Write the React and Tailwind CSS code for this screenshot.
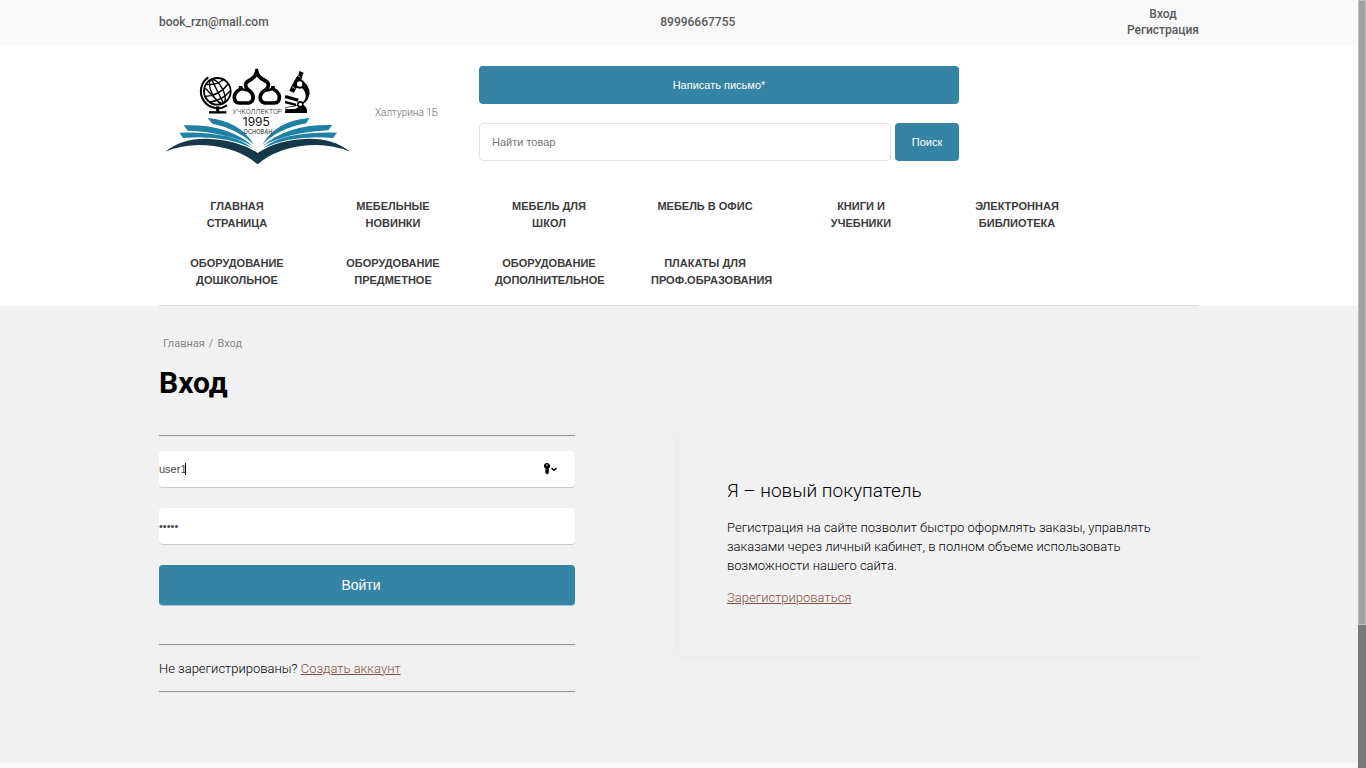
import React, { useState } from "react";

const menu = [
  "Главная страница",
  "Мебельные новинки",
  "Мебель для школ",
  "Мебель в офис",
  "Книги и учебники",
  "Электронная библиотека",
  "Оборудование дошкольное",
  "Оборудование предметное",
  "Оборудование дополнительное",
  "Плакаты для проф.образования",
];

function Logo() {
  return (
    <svg viewBox="12 21 600 330" className="h-[110px] w-[200px] shrink-0" role="img" aria-label="Учколлектор">
      <g fill="none" stroke="#000">
        <circle cx="187" cy="109" r="40" strokeWidth="5.5" />
        <ellipse cx="187" cy="109" rx="17" ry="39" strokeWidth="4" transform="rotate(-28 187 109)" />
        <path d="M170 74 L205 144 M151 124 Q194 122 219 87 M156 88 Q184 91 204 74 M163 141 Q202 137 225 108 M151 100 L196 147" strokeWidth="4" />
        <path d="M160 67 A49 49 0 1 0 216 151" strokeWidth="6" />
        <path d="M188 154 V170" strokeWidth="9" />
        <path d="M162 172 H214" strokeWidth="7" />
        <path d="M257 93 V102 Q240 111 238 124 Q237 144 253 144 H281 Q296 140 294 124 Q292 112 279 104 Q262 86 285 75 Q303 66 305 49 Q307 66 327 75 Q350 86 333 104 Q318 112 316 124 Q314 140 329 144 H358 Q374 144 373 124 Q371 111 354 102 V93" strokeWidth="11" strokeLinejoin="round" />
        <path d="M257 98 Q262 106 280 106 M354 98 Q350 106 332 106" strokeWidth="8" />
      </g>
      <path d="M299 58 L301 41 H309 L311 58 Z" />
      <g fill="#000">
        <path d="M433 48 L446 53 L443 60 L441 69 L434 80 L423 102 L416 113 L403 107 L411 91 L424 67 L431 59 Z" />
        <circle cx="434" cy="87" r="14" />
        <path d="M444 77 Q474 103 459 132 Q449 149 423 154 L392 158 Q391 163 397 163 H456 V174 H391 V157 L426 151 Q455 141 452 121 Q450 104 439 99 Z" />
        <path d="M442 150 Q457 152 456 174 H390 Q390 164 398 164 L422 161 Z" />
        <path d="M392 120 L431 131 L428 140 L389 129 Z M390 137 L424 146 L422 153 L390 145 Z" />
        <circle cx="436" cy="148" r="10" />
      </g>
      <circle cx="434" cy="87" r="8" fill="#fff" />
      <circle cx="436" cy="148" r="5" fill="#fff" />
      <path d="M429 63 L437 67 M411 95 L421 101 M391 133 L427 143" stroke="#fff" strokeWidth="2" />
      <path d="M31 290 Q80 250 155 251 Q248 254 308 294 Q366 254 460 251 Q536 250 585 290 Q527 266 461 271 Q366 278 308 328 Q249 278 154 271 Q90 266 31 290 Z" fill="#15394a" />
      <g fill="#1f80a3">
        <path d="M73 233 Q231 229 291 279 Q206 239 84 249 Z M86 211 Q218 206 293 273 Q218 232 98 227 Z M158 189 Q254 198 296 268 Q248 221 172 206 Z" />
        <path d="M546 233 Q385 229 325 279 Q410 239 534 249 Z M532 210 Q400 206 323 273 Q398 232 520 226 Z M463 189 Q362 198 323 268 Q369 221 454 205 Z" />
      </g>
      <text x="307" y="177" textAnchor="middle" fontSize="21" fontWeight="300" fontFamily="Roboto, sans-serif" fill="#111">УЧКОЛЛЕКТОР</text>
      <text x="304" y="213" textAnchor="middle" fontSize="36" fontFamily="Inter, sans-serif" fill="#111">1995</text>
      <text x="309" y="236" textAnchor="middle" fontSize="17" fontFamily="Inter, sans-serif" fill="#222">ОСНОВАН</text>
    </svg>
  );
}

function KeyIcon() {
  return (
    <svg viewBox="0 0 14 12" className="h-3 w-3.5" aria-hidden="true">
      <path fillRule="evenodd" d="M3 0a3 3 0 0 1 1.8 5.4V10L3.2 11.5 1.4 10V5.6A3 3 0 0 1 3 0Zm0 1.2a.8.8 0 1 0 0 1.6.8.8 0 0 0 0-1.6Z" />
      <path d="M7.500 5l2.500 2.300L12.500 5" fill="none" stroke="#000" strokeWidth="1.5" />
    </svg>
  );
}

const rule = "border-t border-t-[#949494] border-b border-b-[#eaeaea]";
const field =
  "block h-[37px] w-full rounded-sm border-b border-[#c8c8c8] bg-white font-['Liberation_Sans',sans-serif] text-[11px] text-[#444] outline-none";

export default function App() {
  const [login, setLogin] = useState("user1");
  const [password, setPassword] = useState("12345");

  return (
    <div className="flex h-screen overflow-hidden bg-[#f8f8f8] font-[Roboto,sans-serif] text-[#333]">
      <div className="min-w-0 flex-1">
        <div className="bg-[#f9f9f9] pb-px">
          <div className="mx-auto flex h-11 max-w-[1040px] items-center justify-between text-[12px] leading-4 font-medium text-[#5a5a5a]">
            <a href="mailto:book_rzn@mail.com">book_rzn@mail.com</a>
            <a href="tel:89996667755">89996667755</a>
            <div className="flex flex-col items-center">
              <a href="#login">Вход</a>
              <a href="#register">Регистрация</a>
            </div>
          </div>
        </div>

        <header className="bg-white">
          <div className="mx-auto max-w-[1040px] border-b border-[#dedede] pb-[5px]">
            <div className="flex h-[141px] items-start">
              <a href="#home" className="mt-[17px] shrink-0"><Logo /></a>
              <p className="mt-[60px] w-[120px] shrink-0 pl-4 text-[10px] leading-4 font-light text-[#666]">Халтурина 1Б</p>
              <div className="mt-[21px] flex w-[480px] flex-col gap-[19px] font-['Liberation_Sans',sans-serif] text-[11px]">
                <button type="button" className="h-[38px] rounded bg-[#3584a4] text-white">Написать письмо*</button>
                <form className="flex gap-1" onSubmit={(e) => e.preventDefault()}>
                  <input
                    type="search"
                    aria-label="Найти товар"
                    placeholder="Найти товар"
                    className="h-[38px] min-w-0 flex-1 rounded border border-[#e2e2e2] px-3 placeholder:text-[#757575]"
                  />
                  <button type="submit" className="h-[38px] w-16 rounded bg-[#3584a4] text-white">Поиск</button>
                </form>
              </div>
            </div>
            <nav className="flex flex-wrap font-['Liberation_Sans',sans-serif] text-[11px] leading-[17px] font-bold text-[#3c3c3c] uppercase">
              {menu.map((item) => (
                <a key={item} href="#catalog" className="w-[15%] px-6 pt-3 pb-[11px] text-center">{item}</a>
              ))}
            </nav>
          </div>
        </header>

        <main className="bg-[#f1f1f1] pt-7 pb-[70px]">
          <div className="mx-auto max-w-[1040px]">
            <nav className="flex gap-1 pt-px pl-1 text-[11px] leading-[18px] text-[#888]" aria-label="Навигация">
              <a href="#home">Главная</a>
              <span>/</span>
              <span>Вход</span>
            </nav>
            <h1 className="pt-[11px] text-[30px] leading-[38px] font-bold text-black">Вход</h1>
            <div className="mt-[18px] flex items-start justify-between overflow-hidden">
              <div className="w-2/5 pt-[15px]">
                <div className={rule} />
                <form className="mt-3.5 flex flex-col gap-5" onSubmit={(e) => e.preventDefault()}>
                  <div className="relative">
                    <input
                      type="text"
                      aria-label="Логин"
                      autoFocus
                      value={login}
                      onChange={(e) => setLogin(e.target.value)}
                      className={`${field} caret-transparent`}
                    />
                    <span className="absolute top-3 right-[17px]"><KeyIcon /></span>
                    <span className="absolute top-3 left-[26px] h-3 w-px bg-black" />
                  </div>
                  <input
                    type="password"
                    aria-label="Пароль"
                    value={password}
                    onChange={(e) => setPassword(e.target.value)}
                    className={field}
                  />
                  <button type="submit" className="h-[41px] rounded-sm border-b border-[#a9c3cf] bg-[#3584a4] pr-3 font-['Liberation_Sans',sans-serif] text-[14px] text-white">
                    Войти
                  </button>
                </form>
                <div className={`mt-[38px] ${rule}`} />
                <p className="py-[13px] text-[13px] leading-[19px] font-light text-black">
                  Не зарегистрированы? <a href="#register" className="text-[#854f44] underline">Создать аккаунт</a>
                </p>
                <div className={rule} />
              </div>
              <section className="w-1/2 pt-2 pb-3">
                <div className="-mr-3 px-12 py-[49px] shadow-[0_2px_9px_rgba(0,0,0,0.04)]">
                  <h2 className="text-[19px] leading-7 font-light text-black">Я – новый покупатель</h2>
                  <p className="pt-[13px] text-[13px] leading-[19px] font-light text-black">
                    Регистрация на сайте позволит быстро оформлять заказы, управлять заказами через личный кабинет, в полном объеме использовать возможности нашего сайта.
                  </p>
                  <a href="#register" className="mt-[13px] inline-block align-top text-[13px] leading-[19px] font-light text-[#854f44] underline">Зарегистрироваться</a>
                </div>
              </section>
            </div>
          </div>
        </main>
      </div>

      <div className="w-2 shrink-0 bg-[#7a7a7a]" aria-hidden="true">
        <div className="h-[81.4%] border border-[#bcbcbc] bg-[#a0a0a0]" />
      </div>
    </div>
  );
}
